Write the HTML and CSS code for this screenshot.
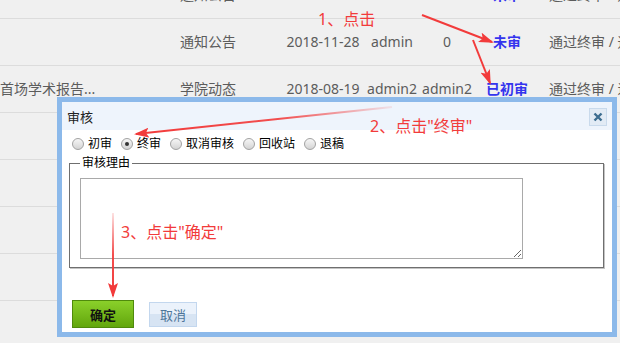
FILE: index.html
```html
<!DOCTYPE html>
<html lang="zh-CN">
  <head>
    <meta charset="UTF-8" />
    <meta name="viewport" content="width=device-width, initial-scale=1.0" />
    <title>审核</title>
    <link rel="stylesheet" href="styles.css">
  </head>
  <body>
    <div class="list">
      <div class="row">
        <div class="cell title"></div>
        <div class="cell cat">通知公告</div>
        <div class="cell">2018-11-28</div>
        <div class="cell">admin</div>
        <div class="cell">0</div>
        <div class="cell status">未审</div>
        <div class="cell op">通过终审 / 通过初审</div>
      </div>
      <div class="row">
        <div class="cell title"></div>
        <div class="cell cat">通知公告</div>
        <div class="cell">2018-11-28</div>
        <div class="cell">admin</div>
        <div class="cell">0</div>
        <div class="cell status">未审</div>
        <div class="cell op">通过终审 / 通过初审</div>
      </div>
      <div class="row">
        <div class="cell title">首场学术报告...</div>
        <div class="cell cat">学院动态</div>
        <div class="cell">2018-08-19</div>
        <div class="cell">admin2</div>
        <div class="cell">admin2</div>
        <div class="cell status">已初审</div>
        <div class="cell op">通过终审 / 退回</div>
      </div>
      <div class="row"></div>
      <div class="row"></div>
      <div class="row"></div>
      <div class="row"></div>
      <div class="row"></div>
    </div>

    <div class="dialog">
      <div class="dialog-head">
        <span class="dialog-title">审核</span>
        <span class="close">
          <svg width="10" height="10" viewBox="0 0 10 10">
            <path d="M1.5 1.5 L8.5 8.5 M8.5 1.5 L1.5 8.5" stroke="#3d6d90" stroke-width="2.4" />
          </svg>
        </span>
      </div>
      <div class="dialog-body">
        <div class="choices">
          <label class="choice"><span class="radio"></span>初审</label>
          <label class="choice"><span class="radio checked"></span>终审</label>
          <label class="choice"><span class="radio"></span>取消审核</label>
          <label class="choice"><span class="radio"></span>回收站</label>
          <label class="choice"><span class="radio"></span>退稿</label>
        </div>
        <fieldset class="reason">
          <legend>审核理由</legend>
          <textarea></textarea>
        </fieldset>
        <div class="actions">
          <button class="btn-ok">确定</button>
          <button class="btn-cancel">取消</button>
        </div>
      </div>
    </div>

    <div class="note note-1">1、点击</div>
    <div class="note note-2">2、点击"终审"</div>
    <div class="note note-3">3、点击"确定"</div>

    <svg class="arrows" width="620" height="343" viewBox="0 0 620 343">
      <defs>
        <marker id="head" markerWidth="15" markerHeight="10" refX="13" refY="5" orient="auto" markerUnits="userSpaceOnUse">
          <path d="M0 0 L15 5 L0 10 L3 5 Z" fill="#f23b3b" />
        </marker>
        <linearGradient id="fade3" gradientUnits="userSpaceOnUse" x1="392" y1="107" x2="140" y2="134">
          <stop offset="0" stop-color="#f23b3b" stop-opacity="0.1" />
          <stop offset="0.45" stop-color="#f23b3b" stop-opacity="0.9" />
          <stop offset="1" stop-color="#f23b3b" />
        </linearGradient>
        <linearGradient id="fade4" gradientUnits="userSpaceOnUse" x1="113" y1="213" x2="113" y2="296">
          <stop offset="0" stop-color="#f23b3b" stop-opacity="0.15" />
          <stop offset="0.5" stop-color="#f23b3b" stop-opacity="0.9" />
          <stop offset="1" stop-color="#f23b3b" />
        </linearGradient>
      </defs>
      <line x1="422" y1="15" x2="492" y2="42" stroke="#f23b3b" stroke-width="2" marker-end="url(#head)" />
      <line x1="473" y1="40" x2="490" y2="83" stroke="#f23b3b" stroke-width="2" marker-end="url(#head)" />
      <line x1="392" y1="107" x2="136" y2="134" stroke="url(#fade3)" stroke-width="2" marker-end="url(#head)" />
      <line x1="113" y1="213" x2="113" y2="296" stroke="url(#fade4)" stroke-width="2" marker-end="url(#head)" />
    </svg>
  </body>
</html>
```

FILE: styles.css
```css
body {
  font-family: "Noto Sans", "Noto Sans CJK SC", sans-serif;
  margin: 0;
  padding: 0;
  width: 620px;
  height: 343px;
  overflow: hidden;
  position: relative;
  background-color: #f0f0f0;
}

/* Background list */
.list {
  margin-top: -28px;
}

.row {
  display: grid;
  grid-template-columns: 170px 114px 78px 60px 50px 70px 1fr;
  align-items: center;
  height: 46px;
  border-bottom: 1px solid #dcdcdc;
  overflow: hidden;
  font-size: 14px;
  line-height: 18px;
  color: #5c5c5c;
}

.cell {
  display: flex;
  justify-content: center;
  white-space: nowrap;
}

.cell.title,
.cell.cat,
.cell.op {
  justify-content: flex-start;
}

.cell.cat {
  padding-left: 10px;
}

.cell.op {
  padding-left: 7px;
}

.cell.status {
  color: #3434ee;
  font-weight: bold;
}

/* Dialog */
.dialog {
  position: absolute;
  left: 57px;
  top: 97px;
  width: 550px;
  height: 230px;
  border: 5px solid #8cb9ea;
  background-color: #ffffff;
  font-size: 12px;
  color: #000000;
}

.dialog-head {
  height: 28px;
  display: flex;
  align-items: center;
  justify-content: space-between;
  padding: 0 5px;
  background-color: #eef4fc;
}

.dialog-title {
  font-size: 13px;
  color: #222222;
}

.close {
  width: 16px;
  height: 16px;
  border: 1px solid #c9daec;
  background-color: #e2ebf5;
  display: flex;
  align-items: center;
  justify-content: center;
  margin-top: 1px;
}

.dialog-body {
  display: flex;
  flex-direction: column;
}

.choices {
  display: flex;
  align-items: center;
  gap: 9px;
  padding: 6px 0 0 10px;
  height: 16px;
}

.choice {
  display: flex;
  align-items: center;
  gap: 4px;
  line-height: 16px;
}

.radio {
  width: 10px;
  height: 10px;
  border: 1px solid #a2a2a2;
  border-radius: 50%;
  background: linear-gradient(#f6f6f6, #d4d4d4);
  display: flex;
  align-items: center;
  justify-content: center;
}

.radio.checked::after {
  content: "";
  width: 4px;
  height: 4px;
  border-radius: 50%;
  background-color: #333333;
}

.reason {
  margin: 3px 8px 0 7px;
  padding: 7px 10px 8px 10px;
  border: 1px solid #6f6f6f;
  box-shadow: 1px 1px 0 #c4c4c4;
}

.reason legend {
  padding: 0 2px;
  font-size: 12px;
  line-height: 16px;
}

.reason textarea {
  display: block;
  width: 443px;
  height: 81px;
  box-sizing: border-box;
  border: 1px solid #a9a9a9;
  margin: 0;
  padding: 2px;
  resize: both;
}

.actions {
  display: flex;
  align-items: center;
  gap: 15px;
  padding-left: 10px;
  margin-top: 32px;
}

.btn-ok {
  width: 62px;
  height: 28px;
  border: 1px solid #4f8a0c;
  background: linear-gradient(#8ad02a, #62a60d);
  font-family: "Noto Sans CJK SC", sans-serif;
  font-size: 13px;
  font-weight: bold;
  color: #111111;
  padding: 0;
}

.btn-cancel {
  width: 48px;
  height: 25px;
  border: 1px solid #c3d7ee;
  background: linear-gradient(#ebf2fb 50%, #d7e4f3 50%);
  font-family: "Noto Sans CJK SC", sans-serif;
  font-size: 13px;
  color: #4e7699;
  padding: 0;
}

/* Annotations */
.note {
  position: absolute;
  font-size: 16px;
  line-height: 20px;
  color: #f23b3b;
  white-space: nowrap;
}

.note-1 {
  left: 318px;
  top: 9px;
}

.note-2 {
  left: 370px;
  top: 116px;
}

.note-3 {
  left: 121px;
  top: 222px;
}

.arrows {
  position: absolute;
  left: 0;
  top: 0;
}
```
